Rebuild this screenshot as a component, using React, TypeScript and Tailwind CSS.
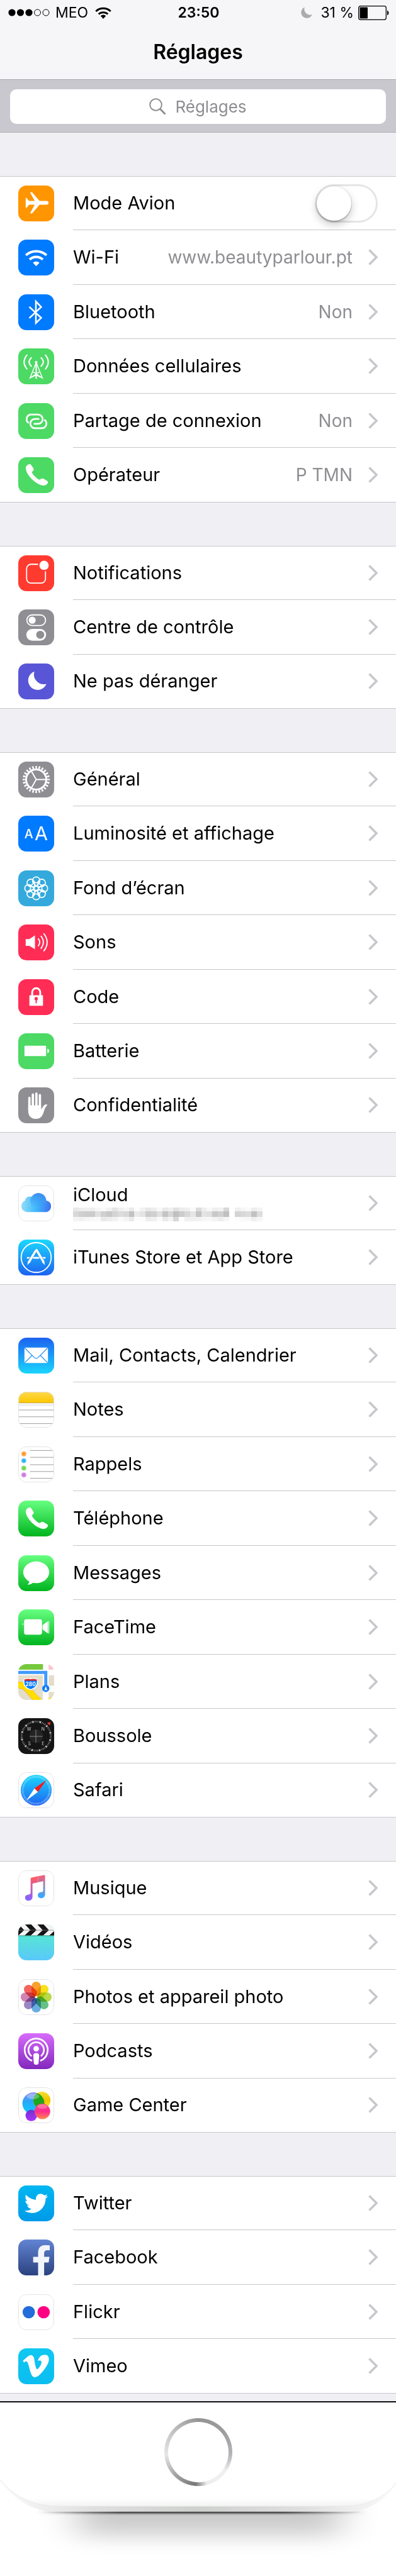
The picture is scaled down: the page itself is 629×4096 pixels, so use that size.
import type { ReactNode } from "react";
import { FaFacebookF, FaTwitter, FaVimeoV } from "react-icons/fa";

type Row = { label: string; icon: ReactNode; value?: string; toggle?: boolean; masked?: boolean };

const W = "#fff";
const TURNS = [0, 45, 90, 135, 180, 225, 270, 315];

function Tile({ bg, children, outline }: { bg: string | [string, string, string]; children?: ReactNode; outline?: boolean }) {
  const isGradient = typeof bg !== "string";
  return (
    <svg viewBox="0 0 58 58" aria-hidden="true" className="size-[57px] shrink-0 self-center overflow-hidden rounded-[13px]">
      {isGradient && (
        <linearGradient id={bg[0]} x1="0" y1="0" x2="0" y2="1">
          <stop offset="0" stopColor={bg[1]} />
          <stop offset="1" stopColor={bg[2]} />
        </linearGradient>
      )}
      <rect width="58" height="58" fill={isGradient ? `url(#${bg[0]})` : (bg as string)} />
      {children}
      {outline && <rect x="0.5" y="0.5" width="57" height="57" rx="12.7" fill="none" stroke="#e2e2e2" />}
    </svg>
  );
}

const Handset = () => (
  <path
    fill={W}
    d="M17 11.5c1.5-.8 3-.3 3.8 1l3.600 5.400c1 1.500.7 3-.6 4.200l-1.800 2c1.500 4.300 8 10.800 12.800 12.400l2.200-1.600c1.500-1 3-.8 4.400.1l5.400 3.300c1.400.9 1.600 2.300.8 3.600-1.600 2.800-4.600 4.400-8 3.800C27 43.500 12.500 28 12 17.500c0-2.800 2.500-5 5-6z"
  />
);

const PlaneIcon = () => (
  <Tile bg="#ff9500">
    <path fill={W} d="M12 20h1.400l4 5h9.200L19 11h3.400L34.500 25H46c2 .3 3 1.400 3 3s-1 2.700-3 3H34.500L22.400 45H19l7.600-14h-9.200l-4 5H12z" />
  </Tile>
);
const WifiIcon = () => (
  <Tile bg="#007aff">
    <g fill="none" stroke={W} strokeWidth="4">
      <path d="M12.3 25.200a25 25 0 0 1 33.400 0" />
      <path d="M18.3 32.200a15.600 15.600 0 0 1 21.400 0" />
    </g>
    <path fill={W} d="M29 43l-5.300-5.700a8 8 0 0 1 10.600 0z" />
  </Tile>
);
const BluetoothIcon = () => (
  <Tile bg="#007aff">
    <path fill="none" stroke={W} strokeWidth="2.6" d="M17.8 20.200L37 38l-8.500 8.500v-35L37 20.500 17.800 38.500" />
  </Tile>
);
const TowerIcon = () => (
  <Tile bg="#4cd964">
    <circle cx="29" cy="22.5" r="2.2" fill={W} />
    <g fill="none" stroke={W}>
      <path strokeWidth="2.2" d="M29 23v26" />
      <path strokeWidth="1.5" d="M28.5 24l-9.500 24 15-10M29.500 24L39 48 24 38M19 48l10-5 10 5" />
      <path strokeWidth="2.2" strokeLinecap="round" d="M21 15.200q-7 6.800 0 13.600M37 15.200q7 6.800 0 13.600M14 10.800q-9 11.200 0 22.400M44 10.800q9 11.200 0 22.400" />
    </g>
  </Tile>
);
const ChainIcon = () => (
  <Tile bg="#4cd964">
    <g fill="none" stroke={W} strokeWidth="2.8">
      <path d="M17 32.200A7.500 7.500 0 0 1 20.500 18.400H32a7.400 7.400 0 0 1 0 15h-7" />
      <path d="M17 32.200A7.500 7.500 0 0 1 20.500 18.400H32a7.400 7.400 0 0 1 0 15h-7" transform="rotate(180 29.5 29.5)" />
    </g>
  </Tile>
);
const OperatorIcon = () => <Tile bg="#4cd964"><Handset /></Tile>;
const NotificationsIcon = () => (
  <Tile bg="#ff3b30">
    <path fill="none" stroke={W} strokeWidth="1.8" d="M32 14.500H20.500a7 7 0 0 0-7 7V38a7 7 0 0 0 7 7H37a7 7 0 0 0 7-7V26" />
    <circle cx="41.7" cy="16.2" r="7.500" fill={W} />
  </Tile>
);
const ControlIcon = () => (
  <Tile bg="#8e8e93">
    <rect x="13.9" y="8.900" width="30.2" height="17.200" rx="8.6" fill="none" stroke={W} strokeWidth="1.8" />
    <circle cx="22.5" cy="17.500" r="5.7" fill={W} />
    <rect x="13" y="31.5" width="32" height="19" rx="9.5" fill={W} />
    <circle cx="35.5" cy="41" r="6.5" fill="#8e8e93" />
  </Tile>
);
const MoonIcon = () => (
  <Tile bg="#5856d6">
    <path fill={W} d="M26 13A15.300 15.300 0 1 0 45.500 33 16 16 0 0 1 26 13z" />
  </Tile>
);
const GearIcon = () => (
  <Tile bg="#8e8e93">
    <g fill="none" stroke={W}>
      <circle cx="29" cy="29" r="16.3" strokeWidth="3" />
      <circle cx="29" cy="29" r="19.8" strokeWidth="4.4" pathLength="240" strokeDasharray="5 5" strokeDashoffset="2.5" />
      <path strokeWidth="2" d="M29 29h16M29 29l-8-13.900M29 29l-8 13.900" />
    </g>
  </Tile>
);
const DisplayIcon = () => (
  <Tile bg="#007aff">
    <text x="10" y="36.7" fill={W} fontSize="20" fontWeight="500" fontFamily="Inter, sans-serif">A</text>
    <text x="26.5" y="40" fill={W} fontSize="31" fontFamily="Inter, sans-serif">A</text>
  </Tile>
);
const WallpaperIcon = () => (
  <Tile bg="#34aadc">
    <g fill="none" stroke={W} strokeWidth="1.7" transform="translate(29 29)">
      {TURNS.map((a) => (
        <path key={a} transform={`rotate(${a})`} d="M0-3.500L-4.500-8.500A6 6 0 1 1 4.500-8.500z" />
      ))}
      {TURNS.map((a) => (
        <path key={a} transform={`rotate(${a})`} d="M-5.500-11Q0-7 5.500-11" />
      ))}
      <circle r="3.4" />
    </g>
  </Tile>
);
const SoundIcon = () => (
  <Tile bg="#ff2d55">
    <path fill={W} d="M12 23.700h6l9-6.200v22.500l-9-5.500h-6z" />
    <path fill="none" stroke={W} strokeWidth="2" strokeLinecap="round" d="M32.500 23.200q4.500 5.600 0 11.200M37 19q7.400 9.800 0 19.600M41.500 15q10.400 13.800 0 27.600" />
  </Tile>
);
const LockIcon = () => (
  <Tile bg="#ff2d55">
    <rect x="18" y="26" width="22" height="17" fill={W} />
    <path fill="none" stroke={W} strokeWidth="3" d="M22.500 27v-5.500a6.500 7 0 0 1 13 0V27" />
    <circle cx="29" cy="31.5" r="2.7" fill="#ff2d55" />
    <rect x="28" y="32" width="2" height="7" fill="#ff2d55" />
  </Tile>
);
const BatteryIcon = () => (
  <Tile bg="#4cd964">
    <rect x="10" y="20" width="35" height="17" rx="1" fill={W} />
    <path fill={W} d="M47 25q3 .8 3 3.500t-3 3.500z" />
  </Tile>
);
const HandIcon = () => (
  <Tile bg="#8e8e93">
    <path fill="none" stroke={W} strokeWidth="3.8" strokeLinecap="round" d="M18 17v20M23.600 11.500V34M29.300 10v24M35 12.500V36" />
    <path fill={W} d="M16.100 29V40C17 47.500 22 51 28.500 51c6 0 9.500-3 11.500-8l3.500-10 3.700-4.800c-2.700-1.700-5.700-.2-7.700 3.800L36.900 36v-7z" />
  </Tile>
);
const CloudIcon = () => (
  <Tile bg={W} outline>
    <linearGradient id="cloud" gradientUnits="userSpaceOnUse" x1="5" y1="30" x2="53" y2="34">
      <stop offset="0" stopColor="#93def6" />
      <stop offset="0.5" stopColor="#3fb9fd" />
      <stop offset="1" stopColor="#3d70ee" />
    </linearGradient>
    <linearGradient id="cloudTop" x1="0" y1="0" x2="0" y2="1">
      <stop offset="0" stopColor="#3b8fec" />
      <stop offset="1" stopColor="#3fa0f5" stopOpacity="0" />
    </linearGradient>
    <path fill="url(#cloud)" d="M14.500 43a9.600 9.600 0 0 1-3.600-18.500c.6-5.500 7-8.500 12-5.500 5-9.500 20.600-8.500 22.300 5.500C50.500 25.500 53 29 53 33.500c0 5.500-4 9.500-9 9.500z" />
    <circle cx="32.5" cy="25" r="12.9" fill="url(#cloudTop)" />
  </Tile>
);
const AppStoreIcon = () => (
  <Tile bg={["appstore", "#1bd8fe", "#1d62f0"]}>
    <circle cx="29" cy="29" r="24.2" fill="none" stroke={W} strokeWidth="1.9" />
    <g fill="none" stroke={W}>
      <path strokeWidth="2.6" d="M14 29.600h30" />
      <path strokeWidth="5.6" stroke="#1e98f7" d="M28.500 17.500L17 37M29.500 17.500L41 37" />
      <path strokeWidth="2.6" d="M24 29.600h10" />
      <path strokeWidth="3.6" strokeLinecap="round" d="M27.600 19L17.500 36" />
      <path strokeWidth="3.6" strokeLinecap="round" d="M29.500 16.800L40.500 35.500" />
    </g>
    <path fill={W} d="M15.800 35l3.200 2-4.500 4.200zM38.500 37l3.300-2 1.500 6.200z" />
  </Tile>
);
const MailIcon = () => (
  <Tile bg={["mail", "#1d62f0", "#1ad5fd"]}>
    <rect x="10" y="16" width="38" height="25" rx="1" fill={W} />
    <path fill="none" stroke="#1c8df7" strokeWidth="1.2" d="M10.500 16.500L26 32.200q3 2.600 6 0L47.500 16.500M10.500 40.500L22 29M47.500 40.500L36 29" />
  </Tile>
);
const NotesIcon = () => (
  <Tile bg={W} outline>
    <linearGradient id="notes" x1="0" y1="0" x2="0" y2="1">
      <stop offset="0" stopColor="#fed84d" />
      <stop offset="1" stopColor="#fdc700" />
    </linearGradient>
    <rect width="58" height="18" fill="url(#notes)" />
    <path stroke="#c0a040" d="M0 18h58" />
    <path stroke="#a0a0a0" strokeDasharray="1 1" d="M0 21.500h58" />
    <path stroke="#9c9c9c" d="M0 29.500h58M0 40.500h58M0 51.500h58" />
  </Tile>
);
const RemindersIcon = () => (
  <Tile bg={W} outline>
    <path stroke="#9c9c9c" d="M19 6.500h39M19 17.500h39M19 29.500h39M19 40.500h39M19 51.500h39" />
    {[["#fd9426", 12], ["#26aef5", 23], ["#6bd64a", 35], ["#cc73e1", 46]].map(([c, y]) => (
      <g key={y} fill={c as string}>
        <circle cx="9" cy={y} r="4" opacity="0.75" />
        <circle cx="9" cy={y} r="2.2" />
      </g>
    ))}
  </Tile>
);
const PhoneIcon = () => <Tile bg={["phone", "#67ff81", "#01b41f"]}><Handset /></Tile>;
const MessagesIcon = () => (
  <Tile bg={["messages", "#67ff81", "#01b41f"]}>
    <ellipse cx="29" cy="27.5" rx="21" ry="17.5" fill={W} />
    <path fill={W} d="M18 40q.5 4.500-3 7.500 6 0 9.500-4z" />
  </Tile>
);
const FaceTimeIcon = () => (
  <Tile bg={["facetime", "#67ff81", "#01b41f"]}>
    <rect x="9.4" y="16" width="29" height="25" rx="3.5" fill={W} />
    <path fill={W} d="M39.300 25.500l8.500-6.500v20l-8.500-6.500zM48.700 19h1.300v20h-1.300zM6 24l1.800-1.500v3z" />
  </Tile>
);
const MapsIcon = () => (
  <Tile bg={W}>
    <rect width="40" height="9" fill="#76c83c" />
    <rect x="49" width="9" height="9" fill="#fcc4d0" />
    <path fill="#e4ddca" d="M0 18h40v40H0zM49 18h9v17h-9zM49 45h9v13h-9z" />
    <path fill="none" stroke="#e9b84d" strokeWidth="11" d="M-2 33.500C18 34 18 50 34 60" />
    <path fill="none" stroke="#ffde00" strokeWidth="9.5" d="M-2 33.500C18 34 18 50 34 60" />
    <path fill={W} d="M40 18h9v40h-9z" />
    <path fill="#ffde00" d="M49 55l9-1v4h-9z" />
    <path fill="none" stroke="#3f9bff" strokeWidth="5" d="M0 13.500h44.500V38" />
    <path fill="#007aff" stroke={W} strokeWidth="1.5" d="M10 24q3 1 5-.5 5 1 10 0 3 1.500 5 .5 4 13-10 17.500Q6 37 10 24z" />
    <path fill="#d9232e" d="M10.300 24.500q2.700.6 4.700-.6 5 1 10 0 2.500 1.200 4.700.6l.6 2.500H9.700z" />
    <text x="20" y="35.5" fill={W} fontSize="8.5" fontWeight="700" textAnchor="middle" fontFamily="Inter, sans-serif">280</text>
    <circle cx="44.5" cy="39.5" r="5.8" fill="#127dfa" />
    <path fill={W} d="M44.500 35.500l2.400 7.500-2.400-1.600-2.400 1.600z" />
  </Tile>
);
const CompassIcon = () => (
  <Tile bg="#151515">
    <circle cx="29" cy="29" r="11" fill="#242424" />
    <circle cx="29" cy="29" r="23.5" fill="none" stroke="#b5b5b5" strokeWidth="3" pathLength="240" strokeDasharray="1.2 2.8" />
    <circle cx="29" cy="29" r="23.5" fill="none" stroke={W} strokeWidth="3" pathLength="240" strokeDasharray="2 18" strokeDashoffset="10" />
    <path stroke="#8a8a8a" d="M18.500 29.500h20.500M28.500 19v20.500" />
    <g fill="#cfcfcf" fontSize="7" textAnchor="middle" fontFamily="Inter, sans-serif">
      <text x="17.5" y="20">W</text>
      <text x="40" y="20">N</text>
      <text x="18" y="43.5">S</text>
      <text x="40" y="43.5">E</text>
    </g>
    <path fill="#ff3b30" d="M46.500 8l5.500-2-.8 5.700z" />
  </Tile>
);
const SafariIcon = () => (
  <Tile bg={W} outline>
    <linearGradient id="safari" x1="0" y1="0" x2="0" y2="1">
      <stop offset="0" stopColor="#19d7ff" />
      <stop offset="1" stopColor="#1e64f0" />
    </linearGradient>
    <circle cx="29" cy="29" r="25" fill="url(#safari)" />
    <circle cx="29" cy="29" r="21.8" fill="none" stroke={W} strokeOpacity="0.75" strokeWidth="3.2" pathLength="240" strokeDasharray="1.2 2.8" />
    <path fill="#ff1714" d="M45.500 12.500L26.200 26.200l5.600 5.600z" />
    <path fill={W} d="M12.800 46L26.200 26.200l5.600 5.600z" />
  </Tile>
);
const MusicIcon = () => (
  <Tile bg={W} outline>
    <linearGradient id="noteLeft" gradientUnits="userSpaceOnUse" x1="30" y1="14" x2="22" y2="47">
      <stop offset="0" stopColor="#fd5c68" />
      <stop offset="1" stopColor="#8762ff" />
    </linearGradient>
    <linearGradient id="noteRight" gradientUnits="userSpaceOnUse" x1="38" y1="10" x2="38" y2="42">
      <stop offset="0" stopColor="#ef5f7c" />
      <stop offset="1" stopColor="#38a8ff" />
    </linearGradient>
    <path fill="url(#noteLeft)" d="M20 13.500q0-1.500 1.500-1.800L32 9.500v9.800L23 21.300V43c0 3.500-2.800 6-6.500 6-3.200 0-5.500-2-5.500-4.800 0-3.200 2.600-4.600 5.600-5q3.400-.3 3.400-2.700z" />
    <path fill="url(#noteRight)" d="M32 9.500L42 7.600q1.300-.2 1.300 1.200V39c0 3.500-2.800 6-6.200 6-3.200 0-5.400-2-5.400-4.800 0-3.200 2.600-4.600 5.200-5 2.600-.3 3.400-.8 3.400-2.700V17.500L32 19.300z" />
  </Tile>
);
const VideosIcon = () => (
  <Tile bg={["videos", "#54f2c4", "#5ac8fa"]}>
    <rect width="58" height="18" fill="#f4f4f4" />
    <g fill="#161616">
      {[-9, 11, 31, 51].map((x) => (
        <path key={x} d={`M${x} 0h10l8.500 9.200L${x + 9} 18H${x - 1}l9.500-8.800z`} />
      ))}
    </g>
    <path stroke="#777" strokeWidth="0.7" d="M0 9.300h58" />
    <path stroke="#3b8f80" d="M0 18.300h58" />
  </Tile>
);
const PETALS = ["#f9a030", "#f6e11c", "#b6da48", "#66c088", "#68aee0", "#9a86c4", "#d184b4", "#f3655c"];
const PhotosIcon = () => (
  <Tile bg={W} outline>
    <g transform="translate(29 29)">
      {PETALS.map((c, i) => (
        <rect key={c} x="-7.5" y="-25" width="15" height="23.5" rx="7.5" fill={c} className="mix-blend-multiply" transform={`rotate(${i * 45})`} />
      ))}
      <circle r="1.6" fill={W} />
    </g>
  </Tile>
);
const PodcastsIcon = () => (
  <Tile bg={["podcasts", "#d86cfb", "#8227bd"]}>
    <g fill="none" stroke={W} strokeWidth="2.7">
      <path d="M22.500 44.500a18.600 18.600 0 1 1 13 0" />
      <path d="M21.500 37a12.500 12.500 0 1 1 15 0" />
    </g>
    <circle cx="29" cy="25" r="4.5" fill={W} />
    <path fill={W} d="M24.200 36q0-4 4.800-4t4.800 4l-1 12q-.4 3-3.800 3t-3.800-3z" />
  </Tile>
);
const GameCenterIcon = () => (
  <Tile bg={W} outline>
    <linearGradient id="bubbleBlue" x1="0" y1="0" x2="0" y2="1"><stop offset="0" stopColor="#8f8df0" /><stop offset="0.4" stopColor="#2aa5f8" /><stop offset="1" stopColor="#08d0ff" /></linearGradient>
    <linearGradient id="bubbleYellow" x1="0" y1="0" x2="0" y2="1"><stop offset="0" stopColor="#f5e02c" /><stop offset="0.5" stopColor="#f2c400" /><stop offset="1" stopColor="#f9ea20" /></linearGradient>
    <linearGradient id="bubbleRed" x1="0" y1="0" x2="0" y2="1"><stop offset="0" stopColor="#fb4f7c" /><stop offset="0.5" stopColor="#ff2a90" /><stop offset="1" stopColor="#ff8a4c" /></linearGradient>
    <linearGradient id="bubblePurple" x1="0" y1="0" x2="0" y2="1"><stop offset="0" stopColor="#6a35d0" /><stop offset="1" stopColor="#b030ff" /></linearGradient>
    <clipPath id="bubbleClip"><circle cx="24.5" cy="26" r="17.8" /></clipPath>
    <circle cx="24.5" cy="26" r="17.8" fill="url(#bubbleBlue)" />
    <circle cx="38.3" cy="21" r="13.8" fill="url(#bubbleYellow)" />
    <circle cx="38.3" cy="21" r="13.8" fill="#1ea51c" clipPath="url(#bubbleClip)" />
    <circle cx="21" cy="45.5" r="9.3" fill="url(#bubblePurple)" />
    <circle cx="39" cy="38.8" r="12.6" fill="url(#bubbleRed)" />
    <ellipse cx="24" cy="14.5" rx="10" ry="4.5" fill={W} opacity="0.3" />
    <ellipse cx="39" cy="31" rx="8" ry="3.5" fill={W} opacity="0.25" />
  </Tile>
);
const TwitterIcon = () => (
  <Tile bg={["twitter", "#00b7f1", "#009ae8"]}><FaTwitter x="10" y="10" size="38" color={W} /></Tile>
);
const FacebookIcon = () => (
  <Tile bg={["facebook", "#6284d3", "#2b427f"]}><FaFacebookF x="12.5" y="9" size="50" color="#f2f5fb" /></Tile>
);
const FlickrIcon = () => (
  <Tile bg={W} outline>
    <circle cx="17" cy="29" r="10" fill="#236ddb" />
    <circle cx="41" cy="29" r="10" fill="#ff0084" />
  </Tile>
);
const VimeoIcon = () => (
  <Tile bg={["vimeo", "#10c8f2", "#0abdf0"]}><FaVimeoV x="4.5" y="4.5" size="48" color={W} /></Tile>
);

const GROUPS: Row[][] = [
  [
    { label: "Mode Avion", icon: <PlaneIcon />, toggle: true },
    { label: "Wi-Fi", icon: <WifiIcon />, value: "www.beautyparlour.pt" },
    { label: "Bluetooth", icon: <BluetoothIcon />, value: "Non" },
    { label: "Données cellulaires", icon: <TowerIcon /> },
    { label: "Partage de connexion", icon: <ChainIcon />, value: "Non" },
    { label: "Opérateur", icon: <OperatorIcon />, value: "P TMN" },
  ],
  [
    { label: "Notifications", icon: <NotificationsIcon /> },
    { label: "Centre de contrôle", icon: <ControlIcon /> },
    { label: "Ne pas déranger", icon: <MoonIcon /> },
  ],
  [
    { label: "Général", icon: <GearIcon /> },
    { label: "Luminosité et affichage", icon: <DisplayIcon /> },
    { label: "Fond d’écran", icon: <WallpaperIcon /> },
    { label: "Sons", icon: <SoundIcon /> },
    { label: "Code", icon: <LockIcon /> },
    { label: "Batterie", icon: <BatteryIcon /> },
    { label: "Confidentialité", icon: <HandIcon /> },
  ],
  [
    { label: "iCloud", icon: <CloudIcon />, masked: true },
    { label: "iTunes Store et App Store", icon: <AppStoreIcon /> },
  ],
  [
    { label: "Mail, Contacts, Calendrier", icon: <MailIcon /> },
    { label: "Notes", icon: <NotesIcon /> },
    { label: "Rappels", icon: <RemindersIcon /> },
    { label: "Téléphone", icon: <PhoneIcon /> },
    { label: "Messages", icon: <MessagesIcon /> },
    { label: "FaceTime", icon: <FaceTimeIcon /> },
    { label: "Plans", icon: <MapsIcon /> },
    { label: "Boussole", icon: <CompassIcon /> },
    { label: "Safari", icon: <SafariIcon /> },
  ],
  [
    { label: "Musique", icon: <MusicIcon /> },
    { label: "Vidéos", icon: <VideosIcon /> },
    { label: "Photos et appareil photo", icon: <PhotosIcon /> },
    { label: "Podcasts", icon: <PodcastsIcon /> },
    { label: "Game Center", icon: <GameCenterIcon /> },
  ],
  [
    { label: "Twitter", icon: <TwitterIcon /> },
    { label: "Facebook", icon: <FacebookIcon /> },
    { label: "Flickr", icon: <FlickrIcon /> },
    { label: "Vimeo", icon: <VimeoIcon /> },
  ],
];

const MOSAIC = [
  { y: 0, h: 6, tones: "e8 ee f0 ee f6 fa f2 e4 f0 f6 ea fc f2 e8 ee f8 ea f0 e2 ec f0 fa dc ee f8 f0 f2 d8 ff f0 f6 fa ee f4" },
  { y: 6, h: 9, tones: "d8 d0 cc cc e0 d0 c8 d4 dc d8 c2 ea e4 cc d0 e0 c4 d8 c0 cc d8 e6 c4 e4 e0 c8 d0 c0 ff d4 d8 dc c2 de" },
  { y: 15, h: 7, tones: "f4 f2 f6 f8 fa ea ee f2 fa f4 ea fc fc ee f0 fa ea f4 d8 fd f0 f0 f2 f6 f8 f4 ee f6 ff fc fa f8 f0 f6" },
];

function MaskedAccount() {
  return (
    <svg viewBox="0 0 306 22" aria-hidden="true" shapeRendering="crispEdges" className="h-[22px] w-[301px]">
      {MOSAIC.map((row) =>
        row.tones.split(" ").map((t, i) => <rect key={`${row.y}-${i}`} x={i * 9} y={row.y} width="9" height={row.h} fill={`#${t}${t}${t}`} />),
      )}
    </svg>
  );
}

const Chevron = () => (
  <svg viewBox="0 0 15 26" aria-hidden="true" className="h-[26px] w-[15px] shrink-0">
    <path d="M1.500 1.500L13 13 1.500 24.500" fill="none" stroke="#c7c7cc" strokeWidth="3.5" />
  </svg>
);

function SettingsRow({ row }: { row: Row }) {
  const shell = "flex w-full pl-[29px]";
  const body = "ml-[30px] flex min-w-0 flex-1 items-center border-b border-[#c8c7cc] pr-[29px] group-last:border-transparent";
  if (row.toggle) {
    return (
      <label className={shell}>
        {row.icon}
        <span className={body}>
          <span className="flex-1">{row.label}</span>
          <input
            type="checkbox"
            role="switch"
            className="relative h-[61px] w-[100px] appearance-none rounded-full border-[3px] border-[#e5e5e5] bg-white before:block before:size-[55px] before:rounded-full before:bg-white before:shadow-[0_6px_14px_rgba(0,0,0,0.22),0_2px_2px_rgba(0,0,0,0.2),0_0_0_1px_rgba(0,0,0,0.08)] checked:border-[#4cd964] checked:bg-[#4cd964] checked:before:ml-auto"
          />
        </span>
      </label>
    );
  }
  return (
    <a href="#" className={shell}>
      {row.icon}
      <span className={body}>
        <span className="flex flex-1 flex-col gap-1">
          <span className="leading-8">{row.label}</span>
          {row.masked && <MaskedAccount />}
        </span>
        {row.value && <span className="mr-[25px] text-[28px] text-[#8e8e93]">{row.value}</span>}
        <Chevron />
      </span>
    </a>
  );
}

function StatusBar() {
  return (
    <div className="grid h-10 grid-cols-[1fr_auto_1fr] items-center pl-[13px] pr-[11px] text-[23px] leading-10">
      <div className="flex items-center">
        <svg viewBox="0 0 67 12" aria-hidden="true" className="h-3 w-[67px]">
          {[0, 1, 2, 3, 4].map((i) => (
            <circle key={i} cx={6 + i * 13.5} cy="6" r={i < 3 ? 5.6 : 5} fill={i < 3 ? "#000" : "none"} stroke={i < 3 ? "none" : "#000"} strokeWidth="1" />
          ))}
        </svg>
        <span className="ml-2">MEO</span>
        <svg viewBox="0 0 26 19" aria-hidden="true" className="ml-[11px] h-[19px] w-[26px]">
          <path fill="none" stroke="#000" strokeWidth="3" d="M1.300 7a17 17 0 0 1 23.400 0M5.700 11.500a11 11 0 0 1 14.600 0" />
          <path d="M13 19l-4.200-4.700a6 6 0 0 1 8.400 0z" />
        </svg>
      </div>
      <span className="font-semibold">23:50</span>
      <div className="flex items-center justify-end">
        <svg viewBox="0 0 18 18" aria-hidden="true" className="mr-[13px] size-[18px]">
          <path fill="#ababab" d="M6 .5A9 9 0 1 0 17.800 12 9 9 0 0 1 6 .5z" />
        </svg>
        <span>31 %</span>
        <svg viewBox="0 0 49 23" aria-hidden="true" className="ml-[7px] h-[23px] w-[49px]">
          <rect x="0.7" y="0.7" width="43.6" height="21.6" rx="3" fill="none" stroke="#000" strokeWidth="1.3" />
          <rect x="2.5" y="2.5" width="12.5" height="18" rx="1" />
          <path d="M46 7.500q2.500 1 2.500 4t-2.500 4z" />
        </svg>
      </div>
    </div>
  );
}

function HomeBezel() {
  return (
    <footer className="relative flex h-[251px] items-start justify-center border-t-2 border-[#141014] bg-white pt-[25px] box-content">
      <svg viewBox="0 0 640 281" preserveAspectRatio="none" aria-hidden="true" className="absolute inset-0 size-full">
        <defs>
          <filter id="soft" filterUnits="userSpaceOnUse" x="-60" y="60" width="760" height="300"><feGaussianBlur stdDeviation="32 16" /></filter>
          <filter id="tight" filterUnits="userSpaceOnUse" x="0" y="160" width="640" height="40"><feGaussianBlur stdDeviation="4 1.5" /></filter>
          <linearGradient id="rim" x1="0" x2="1">
            <stop offset="0" stopColor="#fff" />
            <stop offset="0.25" stopColor="#dedfde" />
            <stop offset="0.5" stopColor="#cfd1cf" />
            <stop offset="0.75" stopColor="#dedfde" />
            <stop offset="1" stopColor="#fff" />
          </linearGradient>
          <linearGradient id="edge" x1="0" x2="1">
            <stop offset="0" stopColor="#444" stopOpacity="0" />
            <stop offset="0.25" stopColor="#444" />
            <stop offset="0.75" stopColor="#444" />
            <stop offset="1" stopColor="#444" stopOpacity="0" />
          </linearGradient>
          <linearGradient id="face" x1="0" y1="0" x2="0" y2="1">
            <stop offset="0.92" stopColor="#fff" />
            <stop offset="1" stopColor="#f4f4f4" />
          </linearGradient>
        </defs>
        <rect x="125" y="140" width="425" height="76" fill="#000" opacity="0.2" filter="url(#soft)" />
        <rect x="60" y="176" width="530" height="4" fill="url(#edge)" filter="url(#tight)" />
        <path fill="url(#rim)" d="M-20 0V90C0 140 40 178 95 178h460c55 0 90-38 105-88V0z" />
        <path fill="url(#edge)" d="M70 177h515v1.500H70z" />
        <path fill="url(#face)" stroke="#e9e9e9" d="M-20 0V90C0 140 40 168 95 168h460c55 0 90-28 105-78V0z" />
      </svg>
      <button
        type="button"
        aria-label="Accueil"
        className="relative size-[108px] rounded-full bg-[conic-gradient(#949496,#9c9c9f_50deg,#b4b4b9_95deg,#f0f0f2_125deg,#ededee_165deg,#777778_185deg,#a3a3a3_225deg,#e6e6e6_265deg,#c6c6c6_305deg,#949496)] p-[6px]"
      >
        <span className="block size-full rounded-full bg-white" />
      </button>
    </footer>
  );
}

export default function App() {
  return (
    <div className="min-h-screen bg-[#efeff4] font-['Inter',sans-serif] text-[29px] leading-9 text-black">
      <header className="border-b border-[#a9a9ad] bg-[#f6f6f8]">
        <StatusBar />
        <h1 className="text-center text-[32px] font-semibold leading-[86px]">Réglages</h1>
      </header>
      <div className="border-b border-[#b3b3b8] bg-[#c9c8ce] px-4 pt-[15px] pb-[13px]">
        <label className="flex h-[55px] items-center justify-center gap-[14px] rounded-[10px] bg-white">
          <svg viewBox="0 0 27 27" aria-hidden="true" className="size-[27px]">
            <circle cx="10.5" cy="10.5" r="9.3" fill="none" stroke="#8e8e93" strokeWidth="2" />
            <path stroke="#8e8e93" strokeWidth="3" d="M17 17l8.500 8.500" />
          </svg>
          <input type="search" aria-label="Réglages" placeholder="Réglages" className="field-sizing-content bg-transparent text-[26px] outline-none placeholder:text-[#8e8e93]" />
        </label>
      </div>
      <main className="flex flex-col gap-[69px] pt-[69px] pb-3">
        {GROUPS.map((rows) => (
          <ul key={rows[0].label} className="bg-white">
            {rows.map((row) => (
              <li key={row.label} className="group flex border-[#c8c7cc] odd:h-[86px] even:h-[87px] first:border-t last:border-b">
                <SettingsRow row={row} />
              </li>
            ))}
          </ul>
        ))}
      </main>
      <HomeBezel />
    </div>
  );
}
